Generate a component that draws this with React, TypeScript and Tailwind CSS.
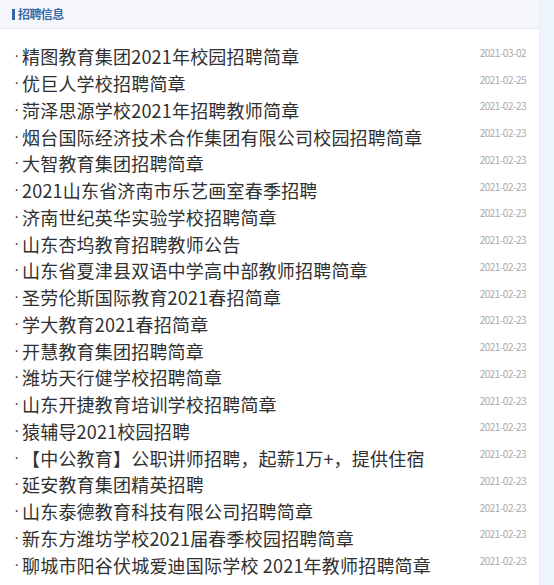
import React from "react";

const items: [string, string][] = [
  ["精图教育集团2021年校园招聘简章", "2021-03-02"],
  ["优巨人学校招聘简章", "2021-02-25"],
  ["菏泽思源学校2021年招聘教师简章", "2021-02-23"],
  ["烟台国际经济技术合作集团有限公司校园招聘简章", "2021-02-23"],
  ["大智教育集团招聘简章", "2021-02-23"],
  ["2021山东省济南市乐艺画室春季招聘", "2021-02-23"],
  ["济南世纪英华实验学校招聘简章", "2021-02-23"],
  ["山东杏坞教育招聘教师公告", "2021-02-23"],
  ["山东省夏津县双语中学高中部教师招聘简章", "2021-02-23"],
  ["圣劳伦斯国际教育2021春招简章", "2021-02-23"],
  ["学大教育2021春招简章", "2021-02-23"],
  ["开慧教育集团招聘简章", "2021-02-23"],
  ["潍坊天行健学校招聘简章", "2021-02-23"],
  ["山东开捷教育培训学校招聘简章", "2021-02-23"],
  ["猿辅导2021校园招聘", "2021-02-23"],
  ["【中公教育】公职讲师招聘，起薪1万+，提供住宿", "2021-02-23"],
  ["延安教育集团精英招聘", "2021-02-23"],
  ["山东泰德教育科技有限公司招聘简章", "2021-02-23"],
  ["新东方潍坊学校2021届春季校园招聘简章", "2021-02-23"],
  ["聊城市阳谷伏城爱迪国际学校 2021年教师招聘简章", "2021-02-23"],
];

export default function App() {
  return (
    <div
      className="flex w-[554px] h-[585px] bg-[#eef4fb] overflow-hidden"
      style={{ fontFamily: '"Noto Sans CJK SC", "Noto Sans", sans-serif' }}
    >
      <div className="flex flex-col w-[540px] bg-white border-r border-[#e8edf3]">
        <div className="flex items-center h-[29px] bg-[#f4f6fb] border-b border-[#e6e9ee] pl-[12px]">
          <div className="w-[3px] h-[11px] bg-[#3366aa] mr-[3px]" />
          <span className="text-[12px] font-bold text-[#3a6aa8] tracking-[-0.6px] leading-none">
            招聘信息
          </span>
        </div>
        <div className="flex flex-col pt-[14px]">
          {items.map(([t, d], i) => (
            <div key={i} className="flex items-center h-[26.75px] pl-[14px] pr-[13px]">
              <span
                className="text-[16px] text-[#444] w-[8px] leading-none"
                style={{ fontFamily: '"Liberation Sans", sans-serif' }}
              >
                ·
              </span>
              <span className="flex-1 text-[18px] text-[#303030] tracking-[0.2px] leading-none whitespace-nowrap">
                {t}
              </span>
              <span className="text-[10px] text-[#a9a9a9] tracking-[-0.5px] leading-none pb-[7px]">
                {d}
              </span>
            </div>
          ))}
        </div>
      </div>
      <div className="flex-1" />
    </div>
  );
}
